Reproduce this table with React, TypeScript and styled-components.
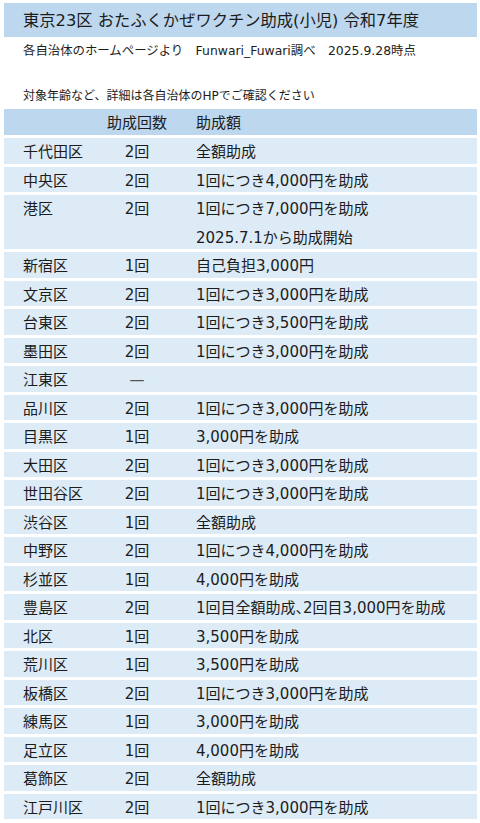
import React from "react";
import styled, { createGlobalStyle } from "styled-components";

const GlobalStyle = createGlobalStyle`
  html, body {
    margin: 0;
    padding: 0;
    background: #ffffff;
  }
  body {
    font-family: "DejaVu Sans", "Noto Sans CJK JP", sans-serif;
    color: #1c1c1c;
  }
`;

const Page = styled.div`
  width: 480px;
  box-sizing: border-box;
  padding: 3px 3px 0 4px;
  display: flex;
  flex-direction: column;
`;

const TitleBar = styled.h1`
  margin: 0;
  height: 34px;
  box-sizing: border-box;
  padding: 2px 0 0 19px;
  background: #bdd7ee;
  font-size: 16.3px;
  font-weight: 400;
  line-height: 32px;
  white-space: nowrap;
`;

const Caption = styled.p<{ $size: number; $top: number }>`
  margin: ${(p) => p.$top}px 0 0 0;
  padding: 1px 0 0 19px;
  font-size: ${(p) => p.$size}px;
  line-height: 25px;
  white-space: pre;
`;

const Table = styled.div`
  display: flex;
  flex-direction: column;
  gap: 3px;
`;

const Row = styled.div<{ $head?: boolean }>`
  display: grid;
  grid-template-columns: 81px 66px 1fr;
  align-items: start;
  padding-left: 19px;
  min-height: ${(p) => (p.$head ? 26 : 25.5)}px;
  background: ${(p) => (p.$head ? "#bdd7ee" : "#ddebf7")};
  font-size: 15px;
`;

const Cell = styled.div`
  padding-top: 3px;
  line-height: 22.5px;
  white-space: nowrap;
`;

const CountCell = styled(Cell)<{ $dash?: boolean }>`
  text-align: center;
  color: ${(p) => (p.$dash ? "#555" : "inherit")};
`;

const AmountCell = styled(Cell)`
  padding-left: 26px;
  display: flex;
  flex-direction: column;
  gap: 6px;
`;

const Punct = styled.span`
  font-feature-settings: "halt";
`;

type Entry = { ward: string; count: string; amount: string[] };

const data: Entry[] = [
  { ward: "千代田区", count: "2回", amount: ["全額助成"] },
  { ward: "中央区", count: "2回", amount: ["1回につき4,000円を助成"] },
  { ward: "港区", count: "2回", amount: ["1回につき7,000円を助成", "2025.7.1から助成開始"] },
  { ward: "新宿区", count: "1回", amount: ["自己負担3,000円"] },
  { ward: "文京区", count: "2回", amount: ["1回につき3,000円を助成"] },
  { ward: "台東区", count: "2回", amount: ["1回につき3,500円を助成"] },
  { ward: "墨田区", count: "2回", amount: ["1回につき3,000円を助成"] },
  { ward: "江東区", count: "—", amount: [] },
  { ward: "品川区", count: "2回", amount: ["1回につき3,000円を助成"] },
  { ward: "目黒区", count: "1回", amount: ["3,000円を助成"] },
  { ward: "大田区", count: "2回", amount: ["1回につき3,000円を助成"] },
  { ward: "世田谷区", count: "2回", amount: ["1回につき3,000円を助成"] },
  { ward: "渋谷区", count: "1回", amount: ["全額助成"] },
  { ward: "中野区", count: "2回", amount: ["1回につき4,000円を助成"] },
  { ward: "杉並区", count: "1回", amount: ["4,000円を助成"] },
  { ward: "豊島区", count: "2回", amount: ["1回目全額助成、2回目3,000円を助成"] },
  { ward: "北区", count: "1回", amount: ["3,500円を助成"] },
  { ward: "荒川区", count: "1回", amount: ["3,500円を助成"] },
  { ward: "板橋区", count: "2回", amount: ["1回につき3,000円を助成"] },
  { ward: "練馬区", count: "1回", amount: ["3,000円を助成"] },
  { ward: "足立区", count: "1回", amount: ["4,000円を助成"] },
  { ward: "葛飾区", count: "2回", amount: ["全額助成"] },
  { ward: "江戸川区", count: "2回", amount: ["1回につき3,000円を助成"] },
];

function withPunct(text: string) {
  const parts = text.split("、");
  return parts.map((p, i) => (
    <React.Fragment key={i}>
      {p}
      {i < parts.length - 1 && <Punct>、</Punct>}
    </React.Fragment>
  ));
}

export default function App() {
  return (
    <>
      <GlobalStyle />
      <Page>
        <TitleBar>東京23区 おたふくかぜワクチン助成(小児) 令和7年度</TitleBar>
        <Caption $size={12.4} $top={0}>
          {"各自治体のホームページより　Funwari_Fuwari調べ　2025.9.28時点"}
        </Caption>
        <Caption $size={12} $top={20}>
          対象年齢など、詳細は各自治体のHPでご確認ください
        </Caption>
        <Table>
          <Row $head>
            <Cell />
            <CountCell>助成回数</CountCell>
            <AmountCell>
              <span>助成額</span>
            </AmountCell>
          </Row>
          {data.map((d) => (
            <Row key={d.ward}>
              <Cell>{d.ward}</Cell>
              <CountCell $dash={d.count === "—"}>{d.count}</CountCell>
              <AmountCell>
                {d.amount.map((a) => (
                  <span key={a}>{withPunct(a)}</span>
                ))}
              </AmountCell>
            </Row>
          ))}
        </Table>
      </Page>
    </>
  );
}
